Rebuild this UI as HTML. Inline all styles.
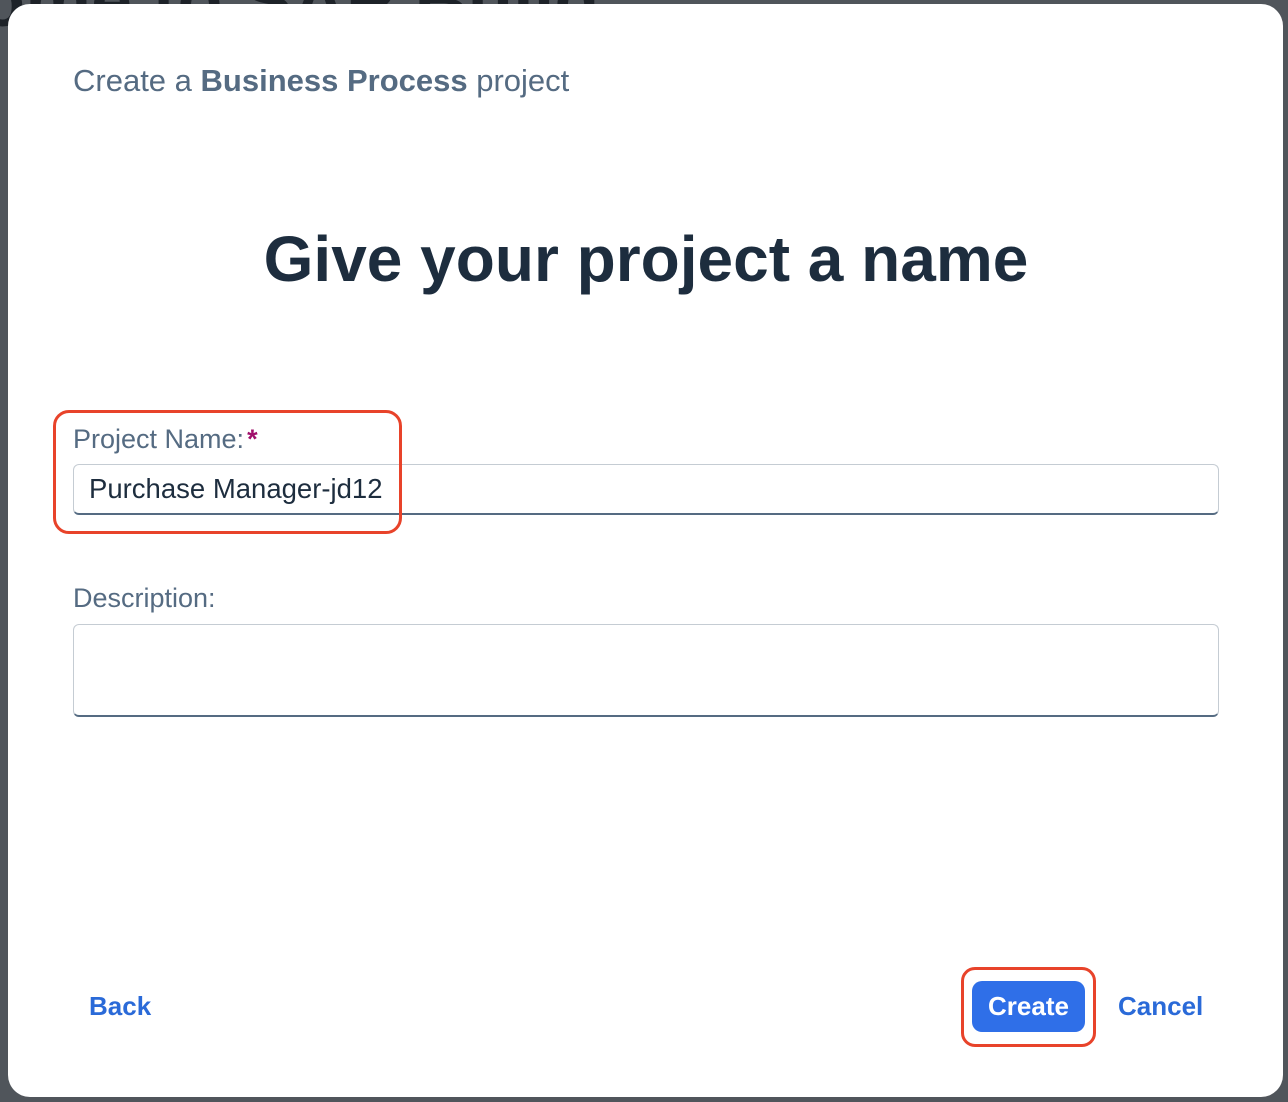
<!DOCTYPE html>
<html><head><meta charset="utf-8"><style>
body{margin:0;width:1288px;height:1102px;background:#50555b;position:relative;overflow:hidden;font-family:"Liberation Sans",sans-serif}
.a{position:absolute;white-space:nowrap}
#dlg{position:absolute;left:8px;top:4px;width:1275px;height:1093px;background:#fff;border-radius:22px}
</style></head><body>
<div class="a" style="left:-20px;top:-42px;font-size:74px;font-weight:bold;color:#1d2228">ome to SAP Build</div>
<div id="dlg"></div>
<div class="a" style="left:73px;top:63px;font-size:31px;color:#556b82">Create a <b>Business Process</b> project</div>
<div class="a" style="left:0;width:1292px;text-align:center;top:222px;font-size:64px;font-weight:bold;color:#1d2d3e">Give your project a name</div>
<div class="a" style="left:73px;top:424px;font-size:27px;color:#556b82">Project Name:<span style="font-weight:bold;margin-left:3px;color:#a0106b">*</span></div>
<div class="a" style="left:73px;top:464px;width:1144px;height:48px;border:1px solid #c5ccd3;border-bottom:2px solid #556b82;border-radius:6px"></div>
<div class="a" style="left:89px;top:473px;font-size:27.5px;color:#1d2d3e">Purchase Manager-jd12</div>
<div class="a" style="left:53px;top:410px;width:343px;height:118px;border:3.5px solid #e8432a;border-radius:16px"></div>
<div class="a" style="left:73px;top:583px;font-size:27px;color:#556b82">Description:</div>
<div class="a" style="left:73px;top:624px;width:1144px;height:90px;border:1px solid #c5ccd3;border-bottom:2px solid #556b82;border-radius:6px"></div>
<div class="a" style="left:89px;top:991px;font-size:26px;font-weight:bold;color:#2a6ad8">Back</div>
<div class="a" style="left:961px;top:967px;width:129px;height:74px;border:3.5px solid #e8432a;border-radius:14px"></div>
<div class="a" style="left:972px;top:981px;width:113px;height:51px;background:#2f6fe8;border-radius:10px;color:#fff;font-size:26px;font-weight:bold;text-align:center;line-height:51px">Create</div>
<div class="a" style="left:1118px;top:991px;font-size:26px;font-weight:bold;color:#2a6ad8">Cancel</div>
</body></html>
